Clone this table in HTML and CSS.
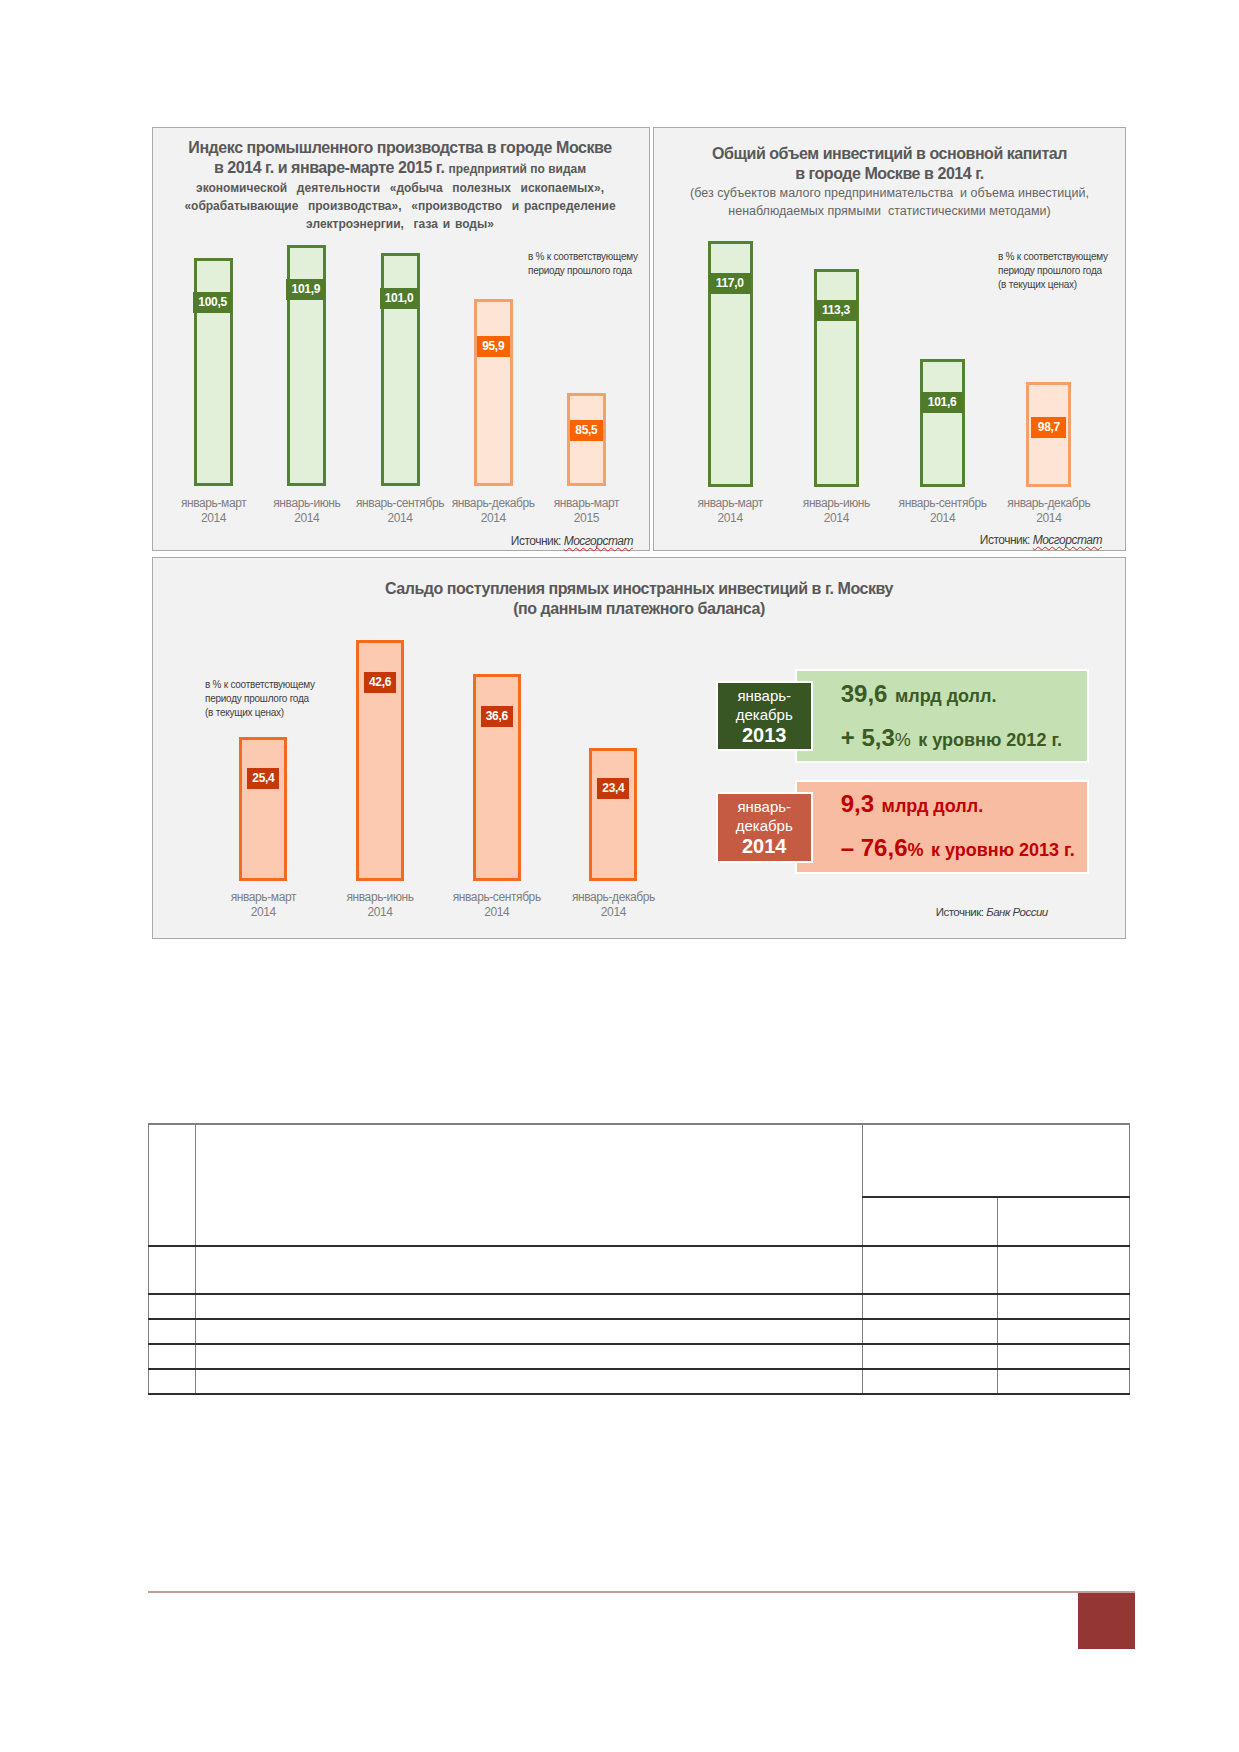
FILE: index.html
```html
<!DOCTYPE html>
<html lang="ru">
<head>
<meta charset="utf-8">
<title>Показатели</title>
<link rel="stylesheet" href="styles.css">
</head>
<body>
<div class="page">
  <div class="top-row">
    <section class="panel p1">
      <div class="title">
        <div class="t-big">Индекс промышленного производства в городе Москве</div>
        <div class="t-big">в 2014 г. и январе-марте 2015 г. <span class="t-small">предприятий по видам</span></div>
        <div class="t-sub">экономической&nbsp; деятельности&nbsp; «добыча&nbsp; полезных&nbsp; ископаемых»,</div>
        <div class="t-sub">«обрабатывающие&nbsp; производства»,&nbsp; «производство&nbsp; и распределение</div>
        <div class="t-sub">электроэнергии,&nbsp; газа и воды»</div>
      </div>
      <div class="note n1">в % к соответствующему<br>периоду прошлого года</div>
      <div class="chart">
        <div class="col c1w">
          <div class="plot h1p"><div class="bar green b1" style="height:228px"><span class="val" style="margin-top:31px">100,5</span></div></div>
          <div class="cat">январь-март<br>2014</div>
        </div>
        <div class="col c1w">
          <div class="plot h1p"><div class="bar green b1" style="height:241px"><span class="val" style="margin-top:31px">101,9</span></div></div>
          <div class="cat">январь-июнь<br>2014</div>
        </div>
        <div class="col c1w">
          <div class="plot h1p"><div class="bar green b1" style="height:233px"><span class="val" style="margin-top:32px">101,0</span></div></div>
          <div class="cat">январь-сентябрь<br>2014</div>
        </div>
        <div class="col c1w">
          <div class="plot h1p"><div class="bar orange b1" style="height:187px"><span class="val" style="margin-top:34px">95,9</span></div></div>
          <div class="cat">январь-декабрь<br>2014</div>
        </div>
        <div class="col c1w">
          <div class="plot h1p"><div class="bar orange b1" style="height:93px"><span class="val" style="margin-top:24px">85,5</span></div></div>
          <div class="cat">январь-март<br>2015</div>
        </div>
      </div>
      <div class="source s1">Источник: <i class="spell">Мосгорстат</i></div>
    </section>

    <section class="panel p2">
      <div class="title">
        <div class="t-big">Общий объем инвестиций в основной капитал</div>
        <div class="t-big">в городе Москве в 2014 г.</div>
        <div class="t-reg">(без субъектов малого предпринимательства&nbsp; и объема инвестиций,</div>
        <div class="t-reg">ненаблюдаемых прямыми&nbsp; статистическими методами)</div>
      </div>
      <div class="note n2">в % к соответствующему<br>периоду прошлого года<br>(в текущих ценах)</div>
      <div class="chart">
        <div class="col c2w">
          <div class="plot h2p"><div class="bar green b2" style="height:246px"><span class="val" style="margin-top:29px">117,0</span></div></div>
          <div class="cat">январь-март<br>2014</div>
        </div>
        <div class="col c2w">
          <div class="plot h2p"><div class="bar green b2" style="height:218px"><span class="val" style="margin-top:28px">113,3</span></div></div>
          <div class="cat">январь-июнь<br>2014</div>
        </div>
        <div class="col c2w">
          <div class="plot h2p"><div class="bar green b2" style="height:128px"><span class="val" style="margin-top:30px">101,6</span></div></div>
          <div class="cat">январь-сентябрь<br>2014</div>
        </div>
        <div class="col c2w">
          <div class="plot h2p"><div class="bar orange b2" style="height:105px"><span class="val" style="margin-top:32px">98,7</span></div></div>
          <div class="cat">январь-декабрь<br>2014</div>
        </div>
      </div>
      <div class="source s2">Источник: <i class="spell">Мосгорстат</i></div>
    </section>
  </div>

  <section class="panel p3">
    <div class="title">
      <div class="t-big">Сальдо поступления прямых иностранных инвестиций в г. Москву</div>
      <div class="t-big">(по данным платежного баланса)</div>
    </div>
    <div class="note n3">в % к соответствующему<br>периоду прошлого года<br>(в текущих ценах)</div>
    <div class="p3-body">
      <div class="chart c3">
        <div class="col c3w">
          <div class="plot h3p"><div class="bar peach b3" style="height:144px"><span class="val" style="margin-top:28px">25,4</span></div></div>
          <div class="cat">январь-март<br>2014</div>
        </div>
        <div class="col c3w">
          <div class="plot h3p"><div class="bar peach b3" style="height:241px"><span class="val" style="margin-top:29px">42,6</span></div></div>
          <div class="cat">январь-июнь<br>2014</div>
        </div>
        <div class="col c3w">
          <div class="plot h3p"><div class="bar peach b3" style="height:207px"><span class="val" style="margin-top:29px">36,6</span></div></div>
          <div class="cat">январь-сентябрь<br>2014</div>
        </div>
        <div class="col c3w">
          <div class="plot h3p"><div class="bar peach b3" style="height:133px"><span class="val" style="margin-top:27px">23,4</span></div></div>
          <div class="cat">январь-декабрь<br>2014</div>
        </div>
      </div>
      <div class="boxes">
        <div class="stat">
          <div class="period dark"><span>январь-</span><span>декабрь</span><b>2013</b></div>
          <div class="figure fig-green">
            <div class="f-line"><span class="num">39,6</span> <span class="unit">млрд долл.</span></div>
            <div class="f-line second"><span class="num">+ 5,3</span><span class="pct">%</span> <span class="unit">к уровню 2012 г.</span></div>
          </div>
        </div>
        <div class="stat">
          <div class="period brick"><span>январь-</span><span>декабрь</span><b>2014</b></div>
          <div class="figure fig-red">
            <div class="f-line"><span class="num">9,3</span> <span class="unit">млрд долл.</span></div>
            <div class="f-line second"><span class="num">– 76,6</span><span class="pct">%</span> <span class="unit">к уровню 2013 г.</span></div>
          </div>
        </div>
        <div class="source s3">Источник: <i>Банк России</i></div>
      </div>
    </div>
  </section>

  <table class="grid">
    <colgroup>
      <col class="w-no"><col class="w-name"><col class="w-v1"><col class="w-v2">
    </colgroup>
    <tr class="hr1"><td rowspan="2"></td><td rowspan="2"></td><td colspan="2"></td></tr>
    <tr class="hr2"><td></td><td></td></tr>
    <tr class="row-tall"><td></td><td></td><td></td><td></td></tr>
    <tr class="row"><td></td><td></td><td></td><td></td></tr>
    <tr class="row"><td></td><td></td><td></td><td></td></tr>
    <tr class="row"><td></td><td></td><td></td><td></td></tr>
    <tr class="row"><td></td><td></td><td></td><td></td></tr>
  </table>

  <footer class="footer"><div class="pgbox"></div></footer>
</div>
</body>
</html>
```

FILE: styles.css
```css
* { box-sizing: border-box; }
html, body { margin: 0; padding: 0; background: #ffffff; }
body { font-family: "Liberation Sans", Arial, sans-serif; color: #404040; }

.page {
  width: 1239px;
  min-height: 1752px;
  padding: 127px 0 0 152px;
}

.top-row { display: flex; gap: 3px; }

.panel {
  position: relative;
  background: #f2f2f2;
  border: 1px solid #a9a9a9;
}
.p1 { width: 498px; height: 424px; padding: 10px 16px 0 14px; }
.p2 { width: 473px; height: 424px; padding: 16px 23px 0 23px; }
.p3 { width: 974px; height: 382px; margin-top: 6px; padding: 21px 0 0 0; }

.title { text-align: center; color: #595959; font-weight: bold; }
.t-big { font-size: 16px; line-height: 20px; letter-spacing: -0.45px; white-space: nowrap; }
.t-small { font-size: 12px; letter-spacing: 0; }
.t-sub { font-size: 12px; line-height: 18px; white-space: nowrap; letter-spacing: 0; word-spacing: 1.5px; }
.t-reg { font-size: 12.5px; line-height: 18px; font-weight: normal; color: #666; white-space: nowrap; letter-spacing: 0; }

.note {
  position: absolute;
  font-size: 10px;
  line-height: 14px;
  letter-spacing: -0.25px;
  color: #3f3f3f;
  white-space: nowrap;
}
.n1 { left: 375px; top: 122px; }
.n2 { left: 344px; top: 122px; }
.n3 { left: 52px; top: 120px; }

.chart { display: flex; }
.col { display: flex; flex-direction: column; align-items: center; }
.c1w { width: 93.5px; }
.c2w { width: 107px; }
.c3w { width: 116.7px; }
.plot { display: flex; align-items: flex-end; justify-content: center; width: 100%; }
.h1p { height: 253px; }
.h2p { height: 267px; }
.h3p { height: 262px; }

.bar { display: flex; flex-direction: column; border: 3px solid; }
.b1 { width: 39px; }
.b2 { width: 45px; }
.b3 { width: 48px; }

.green { background: #e2efd9; border-color: #548235; }
.orange { background: #fde4d4; border-color: #f4a06a; }
.peach { background: #fbcab0; border-color: #f36b1f; }

.val {
  display: block;
  height: 21px;
  line-height: 21px;
  text-align: center;
  color: #ffffff;
  font-weight: bold;
  font-size: 12px;
  letter-spacing: -0.3px;
}
.green .val { background: #4f7b2b; margin-left: -4px; margin-right: -2px; }
.b2.green .val { margin-left: -2px; margin-right: -1px; }
.orange .val { background: #f96300; }
.b2.orange .val { margin-left: 2px; margin-right: 2px; }
.peach .val { background: #c6380a; margin-left: 5px; margin-right: 5px; }

.cat {
  margin-top: 10px;
  font-size: 12px;
  line-height: 15px;
  color: #7f7f7f;
  text-align: center;
  white-space: nowrap;
  letter-spacing: -0.4px;
}
.p2 .cat, .p3 .cat { margin-top: 9px; }

.source {
  font-size: 12px;
  line-height: 14px;
  color: #3f3f3f;
  text-align: right;
  letter-spacing: -0.5px;
  white-space: nowrap;
}
.s1 { margin-top: 8px; }
.s2 { margin-top: 7px; }
.spell { text-decoration: underline wavy #e02020; text-decoration-thickness: 1px; text-underline-offset: 2px; }

.p3-body { display: flex; align-items: flex-start; }
.c3 { margin-left: 52px; }
.boxes { margin-left: 44px; margin-top: 50px; display: flex; flex-direction: column; gap: 17px; }
.stat { display: flex; align-items: center; }
.period {
  position: relative;
  z-index: 1;
  width: 97px;
  height: 70px;
  margin-right: -18px;
  border: 2px solid #ffffff;
  color: #ffffff;
  display: flex;
  flex-direction: column;
  align-items: center;
  justify-content: center;
  font-size: 15px;
  line-height: 19px;
}
.period b { font-size: 20px; line-height: 23px; }
.dark { background: #375623; }
.brick { background: #c65b44; height: 71px; }

.figure {
  width: 294px;
  height: 94px;
  border: 2px solid #ffffff;
  padding: 9px 0 0 44px;
  font-weight: bold;
  white-space: nowrap;
}
.fig-green { background: #c5e0b3; color: #3b5a24; }
.fig-red { background: #f8bca2; color: #c00000; padding-top: 8px; }
.f-line { line-height: 28px; }
.f-line.second { margin-top: 13px; }
.fig-red .f-line.second { margin-top: 13px; }
.num { font-size: 24px; }
.pct { font-size: 18px; font-weight: normal; }
.fig-red .pct { font-weight: bold; }
.unit { font-size: 18px; margin-left: 3px; }

.s3 { padding-right: 41px; font-size: 11.5px; }
.boxes .s3 { margin-top: 14px; }

.grid {
  margin-top: 184px;
  margin-left: -4px;
  width: 981px;
  border-collapse: collapse;
  table-layout: fixed;
}
.w-no { width: 47px; }
.w-name { width: 667px; }
.w-v1 { width: 135px; }
.w-v2 { width: 132px; }
.grid td {
  padding: 0;
  border-left: 1px solid #7f7f7f;
  border-right: 1px solid #7f7f7f;
  border-top: 2px solid #2e2e2e;
  border-bottom: 2px solid #2e2e2e;
}
.grid .hr1 td { border-top: 2px solid #808080; }
.hr1 { height: 73px; }
.hr2 { height: 49px; }
.row-tall { height: 48px; }
.row { height: 25px; }

.footer {
  margin-top: 196px;
  margin-left: -4px;
  width: 987px;
  border-top: 2px solid #c49c9c;
  display: flex;
  justify-content: flex-end;
}
.pgbox { width: 57px; height: 56px; background: #943634; }
```
